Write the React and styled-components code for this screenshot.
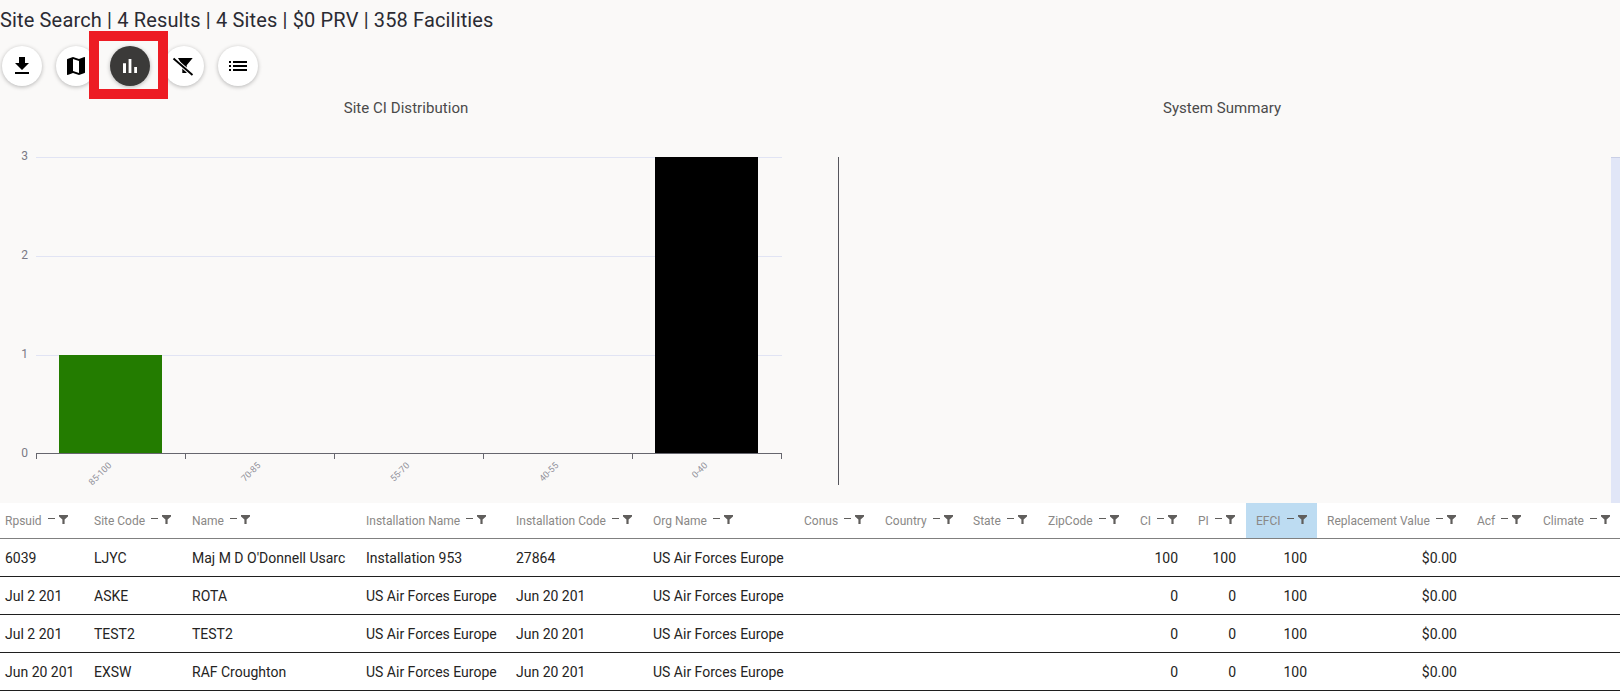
import React from 'react';
import styled, { createGlobalStyle } from 'styled-components';

const GlobalStyle = createGlobalStyle`
  html, body {
    margin: 0;
    padding: 0;
    background: #faf9f8;
    overflow: hidden;
  }
  body {
    font-family: Roboto, "Liberation Sans", sans-serif;
  }
`;

const Page = styled.div`
  width: 1620px;
  height: 691px;
  overflow: hidden;
`;

const Title = styled.h1`
  margin: 0;
  height: 41px;
  font-size: 20px;
  line-height: 41px;
  font-weight: 400;
  letter-spacing: 0.15px;
  color: #2b2b33;
  white-space: nowrap;
`;

const Toolbar = styled.div`
  display: flex;
  gap: 14px;
  padding: 5px 2px 0;
  height: 48px;
`;

const ToolWrap = styled.div`
  position: relative;
  width: 40px;
  height: 40px;
  z-index: ${({ $active }) => ($active ? 2 : 1)};
`;

const ToolButton = styled.button`
  width: 40px;
  height: 40px;
  padding: 0;
  border: 0;
  border-radius: 50%;
  display: flex;
  align-items: center;
  justify-content: center;
  background: ${({ $active }) => ($active ? '#3b3a39' : '#fff')};
  color: ${({ $active }) => ($active ? '#fff' : '#000')};
  box-shadow: 0 1px 4px rgba(0, 0, 0, 0.28);
`;

const Highlight = styled.div`
  position: absolute;
  left: -21px;
  top: -15px;
  width: 59px;
  height: 48px;
  border: 10px solid #ed1c24;
  pointer-events: none;
`;

const Charts = styled.div`
  display: flex;
  gap: 12px;
  height: 409px;
`;

const ChartPanel = styled.section`
  width: ${({ $width }) => $width}px;
  display: flex;
  flex-direction: column;
`;

const ChartTitle = styled.div`
  height: 50px;
  padding-top: 4px;
  text-align: center;
  font-size: 15px;
  line-height: 20px;
  letter-spacing: 0.05px;
  color: #4a4a4a;
`;

const ChartSvg = styled.svg`
  display: block;
  font-family: Roboto, "Liberation Sans", sans-serif;
`;

const Table = styled.div`
  background: #fff;
  font-size: 14px;
  color: #252423;
`;

const Row = styled.div`
  display: grid;
  grid-template-columns: 84px 98px 174px 150px 137px 151px 81px 88px 75px 92px 58px 58px 71px 150px 66px 87px;
  height: ${({ $head }) => ($head ? '35px' : '37px')};
  border-bottom: 1px solid ${({ $head }) => ($head ? '#808080' : '#1f1f1f')};
`;

const HeadCell = styled.div`
  display: flex;
  align-items: center;
  padding: 0 0 0 ${({ $first }) => ($first ? '5px' : '10px')};
  font-size: 12px;
  color: #8a8886;
  white-space: nowrap;
  background: ${({ $sorted }) => ($sorted ? '#bddcf2' : 'transparent')};
`;

const HeadIcons = styled.span`
  display: inline-flex;
  align-items: center;
  gap: 4px;
  margin: -3px 0 0 6px;
  color: #605e5c;
`;

const Dash = styled.span`
  width: 7px;
  height: 1px;
  margin-top: -1px;
  background: #605e5c;
`;

const Cell = styled.div`
  display: flex;
  align-items: center;
  justify-content: ${({ $right }) => ($right ? 'flex-end' : 'flex-start')};
  padding: ${({ $first }) => ($first ? '0 0 0 5px' : '0 10px')};
  white-space: nowrap;
  overflow: hidden;
`;

const columns = [
  { label: 'Rpsuid' },
  { label: 'Site Code' },
  { label: 'Name' },
  { label: 'Installation Name' },
  { label: 'Installation Code' },
  { label: 'Org Name' },
  { label: 'Conus' },
  { label: 'Country' },
  { label: 'State' },
  { label: 'ZipCode' },
  { label: 'CI', right: true },
  { label: 'PI', right: true },
  { label: 'EFCI', right: true, sorted: true },
  { label: 'Replacement Value', right: true },
  { label: 'Acf' },
  { label: 'Climate' },
];

const rows = [
  ['6039', 'LJYC', "Maj M D O'Donnell Usarc", 'Installation 953', '27864', 'US Air Forces Europe', '', '', '', '', '100', '100', '100', '$0.00', '', ''],
  ['Jul 2 201', 'ASKE', 'ROTA', 'US Air Forces Europe', 'Jun 20 201', 'US Air Forces Europe', '', '', '', '', '0', '0', '100', '$0.00', '', ''],
  ['Jul 2 201', 'TEST2', 'TEST2', 'US Air Forces Europe', 'Jun 20 201', 'US Air Forces Europe', '', '', '', '', '0', '0', '100', '$0.00', '', ''],
  ['Jun 20 201', 'EXSW', 'RAF Croughton', 'US Air Forces Europe', 'Jun 20 201', 'US Air Forces Europe', '', '', '', '', '0', '0', '100', '$0.00', '', ''],
];

const Icon = ({ d }) => (
  <svg width="24" height="24" viewBox="0 0 24 24" fill="currentColor">
    <path d={d} />
  </svg>
);

const FilterOff = () => (
  <svg width="24" height="24" viewBox="0 0 24 24" fill="currentColor">
    <path d="M6 4h14.7l-6 7.2V19h-4.4v-7.8z" />
    <path d="M1.5 4.5l19 16.5" stroke="#fff" strokeWidth="3.8" />
    <path d="M1.5 4.5l19 16.5" stroke="currentColor" strokeWidth="1.9" />
  </svg>
);

const FilterSmall = () => (
  <svg width="9" height="9" viewBox="0 0 9 9" fill="currentColor">
    <path d="M0 0h9v1.4L5.6 4.6V9H3.4V4.6L0 1.4z" />
  </svg>
);

const CiChart = () => {
  const ticks = [36, 185, 334, 483, 632, 781];
  const labels = ['85-100', '70-85', '55-70', '40-55', '0-40'];
  const gridLines = [
    { y: 157, label: '3' },
    { y: 256, label: '2' },
    { y: 355, label: '1' },
  ];
  return (
    <ChartSvg width="812" height="355" viewBox="0 148 812 355">
      {gridLines.map((g) => (
        <g key={g.label}>
          <line x1="36" x2="782" y1={g.y + 0.5} y2={g.y + 0.5} stroke="#e1e4f4" />
          <text x="28" y={g.y + 3} textAnchor="end" fontSize="12" fill="#7a7a85">{g.label}</text>
        </g>
      ))}
      <rect x="59" y="355" width="103" height="98" fill="#237c00" />
      <rect x="655" y="157" width="103" height="296" fill="#000" />
      <text x="28" y="457" textAnchor="end" fontSize="12" fill="#7a7a85">0</text>
      <line x1="36" x2="782" y1="453.5" y2="453.5" stroke="#66666e" />
      {ticks.map((x) => (
        <line key={x} x1={x + 0.5} x2={x + 0.5} y1="453" y2="459" stroke="#66666e" />
      ))}
      {labels.map((t, i) => (
        <text
          key={t}
          textAnchor="end"
          fontSize="9"
          fill="#8f8f98"
          transform={`translate(${ticks[i] + 76} 466) rotate(-45)`}
        >
          {t}
        </text>
      ))}
    </ChartSvg>
  );
};

const SummaryChart = () => (
  <ChartSvg width="796" height="355" viewBox="824 148 796 355">
    <line x1="838.5" x2="838.5" y1="157" y2="485" stroke="#55555c" />
    <rect x="1611" y="157" width="9" height="346" fill="#e1e6f7" />
    <rect x="1611" y="157" width="9" height="1" fill="#c9cfe6" />
  </ChartSvg>
);

export default function App() {
  return (
    <Page>
      <GlobalStyle />
      <Title>Site Search | 4 Results | 4 Sites | $0 PRV | 358 Facilities</Title>
      <Toolbar>
        <ToolWrap>
          <ToolButton><Icon d="M19 9h-4V3H9v6H5l7 7 7-7zM5 18v2h14v-2H5z" /></ToolButton>
        </ToolWrap>
        <ToolWrap>
          <ToolButton><Icon d="M20.5 3l-.16.03L15 5.1 9 3 3.36 4.9c-.21.07-.36.25-.36.48V20.5c0 .28.22.5.5.5l.16-.03L9 18.9l6 2.1 5.64-1.9c.21-.07.36-.25.36-.48V3.5c0-.28-.22-.5-.5-.5zM15 19l-6-2.11V5l6 2.11V19z" /></ToolButton>
        </ToolWrap>
        <ToolWrap $active>
          <ToolButton $active><Icon d="M5 9.2h3V19H5zM10.6 5h2.8v14h-2.8zm5.6 8H19v6h-2.8z" /></ToolButton>
          <Highlight />
        </ToolWrap>
        <ToolWrap>
          <ToolButton><FilterOff /></ToolButton>
        </ToolWrap>
        <ToolWrap>
          <ToolButton><Icon d="M3 13h2v-2H3v2zm0 4h2v-2H3v2zm0-8h2V7H3v2zm4 4h14v-2H7v2zm0 4h14v-2H7v2zM7 7v2h14V7H7z" /></ToolButton>
        </ToolWrap>
      </Toolbar>
      <Charts>
        <ChartPanel $width={812}>
          <ChartTitle>Site CI Distribution</ChartTitle>
          <CiChart />
        </ChartPanel>
        <ChartPanel $width={796}>
          <ChartTitle>System Summary</ChartTitle>
          <SummaryChart />
        </ChartPanel>
      </Charts>
      <Table>
        <Row $head>
          {columns.map((c, i) => (
            <HeadCell key={c.label} $first={i === 0} $sorted={c.sorted}>
              {c.label}
              <HeadIcons><Dash /><FilterSmall /></HeadIcons>
            </HeadCell>
          ))}
        </Row>
        {rows.map((row, r) => (
          <Row key={r}>
            {row.map((v, i) => (
              <Cell key={i} $first={i === 0} $right={columns[i].right}>{v}</Cell>
            ))}
          </Row>
        ))}
      </Table>
    </Page>
  );
}
